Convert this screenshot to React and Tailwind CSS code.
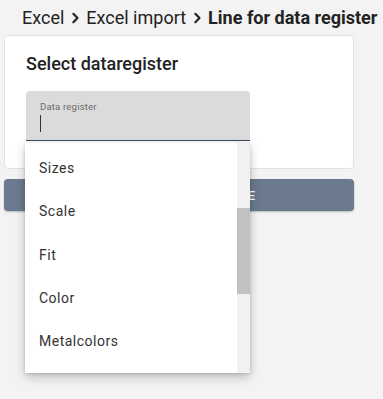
import React from 'react';

const ITEMS = ['Sizes', 'Scale', 'Fit', 'Color', 'Metalcolors'];

function Chevron() {
  return (
    <svg viewBox="0 0 24 24" className="w-[20px] h-[20px] mx-[1px]" fill="none" stroke="#222" strokeWidth="2.6" strokeLinecap="round" strokeLinejoin="round">
      <path d="M10 7l5 5-5 5" />
    </svg>
  );
}

export default function App() {
  return (
    <div className="w-[383px] h-[399px] bg-[#f3f3f3] relative overflow-hidden" style={{ fontFamily: 'Roboto, "Liberation Sans", sans-serif' }}>
      {/* Breadcrumb */}
      <div className="flex items-center pl-[22px] pt-[4px] h-[31px] text-[18px] text-[#222] whitespace-nowrap">
        <span>Excel</span>
        <Chevron />
        <span>Excel import</span>
        <Chevron />
        <span className="font-bold">Line for data register</span>
      </div>

      {/* Card */}
      <div className="mx-[4px] mt-[4px] w-[350px] h-[134px] bg-white border border-[#e2e2e2] rounded-[4px] pl-[21px] pt-[17px]">
        <h1 className="text-[18px] font-medium text-[#222] leading-[22px]">Select dataregister</h1>
        <div className="relative mt-[16px] w-[224px] h-[50px] bg-[#dbdbdb] rounded-t-[4px] border-b border-[#3a4a60]">
          <div className="absolute left-[14px] top-[9px] text-[9.5px] text-[#6b6b6b] tracking-[0.2px]">Data register</div>
          <div className="absolute left-[14px] top-[24px] w-[1px] h-[17px] bg-[#333]" />
        </div>
      </div>

      {/* Button */}
      <div className="mx-[4px] mt-[10px] w-[350px] h-[32px] bg-[#6b7a8f] rounded-[4px] shadow-[0_1px_2px_rgba(0,0,0,0.25)] flex items-center justify-center">
        <span className="text-white text-[13.5px] font-medium tracking-[1.25px] pl-[20px]">SELECT LINE TYPE</span>
      </div>

      {/* Dropdown menu */}
      <div className="absolute left-[25px] top-[143px] w-[225px] h-[230px] bg-white shadow-[0_4px_10px_rgba(0,0,0,0.22),0_1px_3px_rgba(0,0,0,0.15)] flex overflow-hidden">
        <div className="flex-1 pt-[4px]">
          {ITEMS.map((item) => (
            <div key={item} className="h-[43.3px] flex items-center pl-[14px] text-[14px] tracking-[0.5px] text-[#333]">
              {item}
            </div>
          ))}
        </div>
        <div className="w-[13px] bg-[#f1f1f1] flex flex-col">
          <div className="h-[65px]" />
          <div className="h-[86px] bg-[#c1c1c1]" />
        </div>
      </div>
    </div>
  );
}
